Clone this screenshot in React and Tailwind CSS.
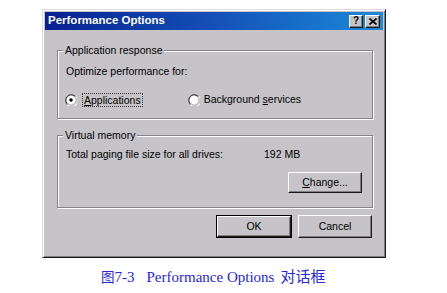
import React from 'react';

const ui = "font-['Liberation_Sans',Arial,sans-serif] text-[10.5px] text-black";

const Radio = ({ checked }) => (
    <svg width="12" height="12" viewBox="0 0 12 12" className="shrink-0">
        <path d="M11 2.5A6 6 0 1 0 2.5 11" fill="none" stroke="#808080" strokeWidth="1" />
        <path d="M9.7 2.3A5 5 0 1 0 2.3 9.7" fill="none" stroke="#404040" strokeWidth="1" />
        <path d="M2.5 11A6 6 0 0 0 11 2.5" fill="none" stroke="#fff" strokeWidth="1" />
        <circle cx="6" cy="6" r="4.3" fill="#fff" />
        {checked && <circle cx="6" cy="6" r="1.8" fill="#000" />}
    </svg>
);

const Button = ({ children, isDefault, className = '' }) => (
    <div className={`${isDefault ? 'border border-black' : ''} ${className}`}>
        <div className="h-full w-full border border-t-white border-l-white border-r-[#1a1a1a] border-b-[#1a1a1a] shadow-[inset_-1px_-1px_0_#808080] flex items-center justify-center">
            {children}
        </div>
    </div>
);

const Group = ({ label, className = '', children }) => (
    <fieldset className={`w-[316px] ml-[12px] border border-[#858388] shadow-[inset_1px_1px_0_#fff,1px_1px_0_#fff] px-[8px] ${className}`}>
        <legend className="-ml-[3px] px-[2px] leading-[13px] bg-[#c6c4c8]">{label}</legend>
        {children}
    </fieldset>
);

export default function App() {
    return (
        <div className="w-[447px] h-[293px] bg-white overflow-hidden">
            <div className={`w-[344px] h-[249px] ml-[42px] mt-[9px] border border-t-[#dedcdf] border-l-[#dedcdf] border-r-[#1a1a1a] border-b-[#1a1a1a] shadow-[inset_1px_1px_0_#fff,inset_-1px_-1px_0_#7f7f7f] p-[2px] bg-[#c6c4c8] flex flex-col ${ui}`}>
                {/* title bar */}
                <div className="h-[18px] bg-gradient-to-r from-[#0a2090] via-[#1550b8] to-[#1c8ad8] flex items-center pl-[3px] pr-[3px]">
                    <span className="text-white font-bold text-[11.5px] flex-1">Performance Options</span>
                    <div className="flex gap-[1px]">
                        <Button className="w-[14px] h-[13px] bg-[#c6c4c8]">
                            <span className="font-bold text-[10px] leading-none">?</span>
                        </Button>
                        <Button className="w-[15px] h-[13px] bg-[#c6c4c8] ml-[1px]">
                            <svg width="8" height="7" viewBox="0 0 8 7">
                                <path d="M0.5 0.5L7.5 6.5M7.5 0.5L0.5 6.5" stroke="#000" strokeWidth="1.6" />
                            </svg>
                        </Button>
                    </div>
                </div>

                <Group label="Application response" className="mt-[14px] h-[75px]">
                    <div className="mt-[8px] leading-[13px]">Optimize performance for:</div>
                    <div className="mt-[14px] flex items-center">
                        <div className="-ml-[1px]"><Radio checked /></div>
                        <span className="ml-[5px] px-[1px] border border-dotted border-[#333] leading-[12px]"><u>A</u>pplications</span>
                        <div className="ml-[45px]"><Radio /></div>
                        <span className="ml-[4px]">Background <u>s</u>ervices</span>
                    </div>
                </Group>

                <Group label="Virtual memory" className="mt-[10px] h-[79px]">
                    <div className="mt-[6px] flex leading-[13px]">
                        <span className="w-[198px]">Total paging file size for all drives:</span>
                        <span>192 MB</span>
                    </div>
                    <div className="flex justify-end mt-[11px] pr-[2px]">
                        <Button className="w-[74px] h-[21px]"><span><u>C</u>hange...</span></Button>
                    </div>
                </Group>

                <div className="flex justify-end gap-[6px] mt-[7px] mr-[11px]">
                    <Button isDefault className="w-[76px] h-[23px]">OK</Button>
                    <Button className="w-[74px] h-[23px]">Cancel</Button>
                </div>
            </div>

            <div className="mt-[10px] ml-[101px] font-['Liberation_Serif','Noto_Sans_CJK_SC',serif] text-[15px] text-[#2626dc] leading-[18px]">
                <span className="text-[13.5px]">图</span>7-3<span className="ml-[12px]">Performance Options</span><span className="ml-[6px]">对话框</span>
            </div>
        </div>
    );
}
